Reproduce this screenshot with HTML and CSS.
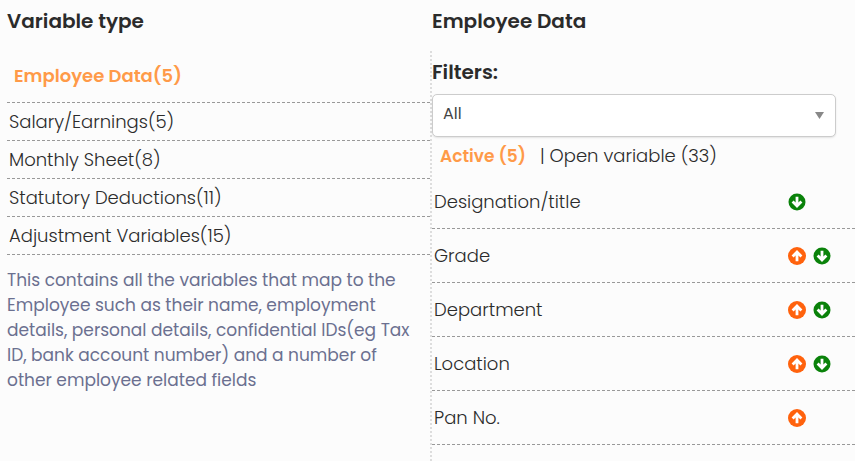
FILE: index.html
```
<!DOCTYPE html>
<html lang="en">
<head>
    <meta charset="UTF-8">
    <meta name="viewport" content="width=device-width, initial-scale=1.0">
    <title>Variables</title>
    <link rel="stylesheet" href="styles.css">
</head>
<body>
    <svg class="sprite" aria-hidden="true">
        <symbol id="arrow-up" viewBox="0 0 18 18">
            <circle cx="9" cy="9" r="9" fill="#ff620d"/>
            <path d="M9 14.2V5M4.6 9.4L9 5l4.4 4.4" fill="none" stroke="#fff" stroke-width="2.8"/>
        </symbol>
        <symbol id="arrow-down" viewBox="0 0 18 18">
            <circle cx="9" cy="9" r="8.5" fill="#0a820a"/>
            <path d="M9 3.8V13M4.6 8.6L9 13l4.4-4.4" fill="none" stroke="#fff" stroke-width="2.8"/>
        </symbol>
    </svg>

    <div class="container">
        <h2 class="title">Variable type</h2>
        <h2 class="title">Employee Data</h2>

        <div class="types">
            <ul class="type-list">
                <li><button type="button" class="type-btn active">Employee Data(5)</button></li>
                <li><button type="button" class="type-btn">Salary/Earnings(5)</button></li>
                <li><button type="button" class="type-btn">Monthly Sheet(8)</button></li>
                <li><button type="button" class="type-btn">Statutory Deductions(11)</button></li>
                <li><button type="button" class="type-btn">Adjustment Variables(15)</button></li>
            </ul>
            <p class="description">This contains all the variables that map to the Employee such as their name, employment details, personal details, confidential IDs(eg Tax ID, bank account number) and a number of other employee related fields</p>
        </div>

        <div class="variables">
            <label for="filter" class="filter-label">Filters:</label>
            <select id="filter" class="filter-select">
                <option>All</option>
            </select>

            <div class="tabs">
                <button type="button" class="tab active">Active (5)</button>
                <span>|</span>
                <button type="button" class="tab">Open variable (33)</button>
            </div>

            <ul class="variable-list">
                <li class="variable">
                    <span class="variable-name">Designation/title</span>
                    <button type="button" class="move" aria-label="Move down"><svg><use href="#arrow-down"/></svg></button>
                </li>
                <li class="variable">
                    <span class="variable-name">Grade</span>
                    <button type="button" class="move" aria-label="Move up"><svg><use href="#arrow-up"/></svg></button>
                    <button type="button" class="move" aria-label="Move down"><svg><use href="#arrow-down"/></svg></button>
                </li>
                <li class="variable">
                    <span class="variable-name">Department</span>
                    <button type="button" class="move" aria-label="Move up"><svg><use href="#arrow-up"/></svg></button>
                    <button type="button" class="move" aria-label="Move down"><svg><use href="#arrow-down"/></svg></button>
                </li>
                <li class="variable">
                    <span class="variable-name">Location</span>
                    <button type="button" class="move" aria-label="Move up"><svg><use href="#arrow-up"/></svg></button>
                    <button type="button" class="move" aria-label="Move down"><svg><use href="#arrow-down"/></svg></button>
                </li>
                <li class="variable">
                    <span class="variable-name">Pan No.</span>
                    <button type="button" class="move" aria-label="Move up"><svg><use href="#arrow-up"/></svg></button>
                </li>
            </ul>
        </div>
    </div>
</body>
</html>
```
FILE: styles.css
```
* {
    margin: 0;
    padding: 0;
    box-sizing: border-box;
}

body {
    background: #fcfcfc;
    color: #2b2b2b;
    font-family: Poppins, Inter, sans-serif;
    font-size: 18px;
    font-weight: 300;
}

ul {
    list-style: none;
}

button {
    background: none;
    border: none;
    color: inherit;
    font: inherit;
    cursor: pointer;
}

.sprite {
    display: none;
}

.container {
    display: grid;
    grid-template-columns: 1fr 1fr;
    grid-template-rows: auto 1fr;
    column-gap: 2px;
    min-height: 100vh;
    padding-left: 7px;
}

.title {
    padding: 6px 0 15px;
    font-size: 20px;
    font-weight: 600;
    line-height: 30px;
}

.types {
    margin-right: -2px;
    border-right: 2px dotted #ddd;
}

.type-list li {
    border-bottom: 1px dashed #999;
}

.type-btn {
    display: block;
    width: 100%;
    padding-left: 2px;
    line-height: 37px;
    text-align: left;
}

.type-btn.active {
    padding: 6px 7px 8px;
    color: #ff9a48;
    font-weight: 600;
}

.description {
    padding: 13px 7px 0 0;
    color: #6b7090;
    font-size: 17px;
    font-weight: 400;
    line-height: 25px;
}

.filter-label {
    display: block;
    padding: 7px 0;
    font-size: 20px;
    font-weight: 600;
    line-height: 29px;
}

.filter-select {
    display: block;
    width: calc(100% - 19px);
    height: 43px;
    padding: 0 10px 4px;
    border: 1px solid #ccc;
    border-radius: 5px;
    background: #fff url("data:image/svg+xml,%3Csvg xmlns='http://www.w3.org/2000/svg' width='9' height='7'%3E%3Cpath d='M0 0h9L4.5 7z' fill='%23888'/%3E%3C/svg%3E") no-repeat right 11px center;
    box-shadow: 0 1px 2px rgba(0, 0, 0, 0.1);
    color: #444;
    font: inherit;
    font-size: 16px;
    font-weight: 400;
    appearance: none;
}

.tabs {
    display: flex;
    padding-left: 8px;
    line-height: 38px;
}

.tab.active {
    margin-right: 14px;
    color: #ff9a48;
    font-size: 17px;
    font-weight: 600;
}

.tabs span {
    margin-right: 5px;
}

.variable {
    display: grid;
    grid-template-columns: 1fr 18px 18px;
    column-gap: 7px;
    align-items: center;
    height: 54px;
    padding: 0 24px 0 2px;
    border-bottom: 1px dashed #999;
}

.move,
.move svg {
    display: block;
    width: 18px;
    height: 18px;
}
```
